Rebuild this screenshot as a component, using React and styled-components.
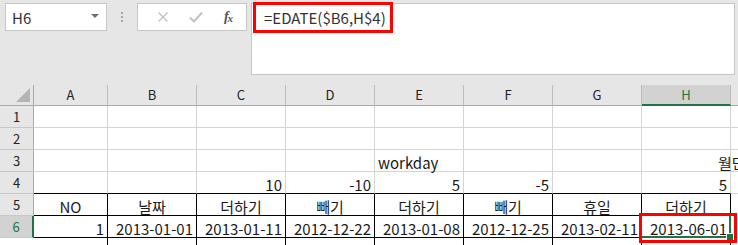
import React from 'react';
import styled, { createGlobalStyle } from 'styled-components';

const GlobalStyle = createGlobalStyle`
  html, body {
    margin: 0;
    padding: 0;
    background: #ffffff;
  }
  body {
    font-family: "Noto Sans CJK KR", "Noto Sans", sans-serif;
  }
`;

const COLS = ['A', 'B', 'C', 'D', 'E', 'F', 'G', 'H', 'I'];

// cell content per row: { col: [text, align] }
const ROWS = [
  { n: 1, cells: {} },
  { n: 2, cells: {} },
  { n: 3, cells: { E: ['workday', 'left'], H: ['월단위', 'spill'] } },
  {
    n: 4,
    cells: {
      C: ['10', 'right'],
      D: ['-10', 'right'],
      E: ['5', 'right'],
      F: ['-5', 'right'],
      H: ['5', 'right'],
    },
  },
  {
    n: 5,
    boxed: true,
    cells: {
      A: ['NO', 'center'],
      B: ['날짜', 'center'],
      C: ['더하기', 'center'],
      D: ['빼기', 'center'],
      E: ['더하기', 'center'],
      F: ['빼기', 'center'],
      G: ['휴일', 'center'],
      H: ['더하기', 'center'],
    },
  },
  {
    n: 6,
    boxed: true,
    active: true,
    cells: {
      A: ['1', 'right'],
      B: ['2013-01-01', 'right'],
      C: ['2013-01-11', 'right'],
      D: ['2012-12-22', 'right'],
      E: ['2013-01-08', 'right'],
      F: ['2012-12-25', 'right'],
      G: ['2013-02-11', 'right'],
      H: ['2013-06-01', 'right'],
    },
  },
  { n: 7, boxed: true, cells: {}, hidden: true },
];

export default function App() {
  return (
    <>
      <GlobalStyle />
      <Window>
        <Toolbar>
          <NameBox>
            <span>H6</span>
            <DropArrow />
          </NameBox>
          <Grip>
            <i />
            <i />
            <i />
          </Grip>
          <FxBox>
            <FxButton>
              <svg width="12" height="12" viewBox="0 0 12 12">
                <path d="M1.5 1.5 L10.5 10.5 M10.5 1.5 L1.5 10.5" stroke="#c2c2c2" strokeWidth="1.4" fill="none" />
              </svg>
            </FxButton>
            <FxButton>
              <svg width="14" height="12" viewBox="0 0 14 12">
                <path d="M1 6.5 L5 10.5 L13 1.5" stroke="#c2c2c2" strokeWidth="2" fill="none" />
              </svg>
            </FxButton>
            <FxButton>
              <FxLabel>
                f<sub>x</sub>
              </FxLabel>
            </FxButton>
          </FxBox>
          <FormulaBar>
            <FormulaText>=EDATE($B6,H$4)</FormulaText>
            <Highlight />
          </FormulaBar>
        </Toolbar>

        <Sheet>
          <Corner>
            <svg width="14" height="14" viewBox="0 0 14 14">
              <polygon points="14,0 14,14 0,14" fill="#b4b4b4" />
            </svg>
          </Corner>
          {COLS.map((c) => (
            <ColHead key={c} $active={c === 'H'}>
              {c}
            </ColHead>
          ))}

          {ROWS.map((row, ri) => {
            const next = ROWS[ri + 1];
            return (
              <React.Fragment key={row.n}>
                <RowHead $active={row.active} $blank={row.hidden}>
                  {row.hidden ? '' : row.n}
                </RowHead>
                {COLS.map((c) => {
                  const content = row.cells[c];
                  const inBox = c !== 'I';
                  const boxed = row.boxed && inBox;
                  const boxAbove = next && next.boxed && !row.boxed && inBox;
                  const selected = row.active && c === 'H';
                  return (
                    <Cell
                      key={c}
                      $align={content ? content[1] : 'left'}
                      $boxed={boxed}
                      $boxBottom={boxed || boxAbove}
                    >
                      {content && <CellText>{content[0]}</CellText>}
                      {selected && (
                        <Selection>
                          <FillHandle />
                        </Selection>
                      )}
                      {selected && <Highlight $cell />}
                    </Cell>
                  );
                })}
              </React.Fragment>
            );
          })}
        </Sheet>
      </Window>
    </>
  );
}

const Window = styled.div`
  width: 738px;
  height: 245px;
  overflow: hidden;
  background: #ffffff;
`;

const Toolbar = styled.div`
  box-sizing: border-box;
  height: 85px;
  padding: 3px 0 10px 5px;
  display: flex;
  align-items: flex-start;
  background: #e6e6e6;
`;

const NameBox = styled.div`
  box-sizing: border-box;
  width: 102px;
  height: 28px;
  background: #ffffff;
  border: 1px solid #c6c6c6;
  display: flex;
  align-items: center;
  justify-content: space-between;
  padding: 0 7px 0 6px;
  font-size: 15px;
  color: #333333;
`;

const DropArrow = styled.span`
  width: 0;
  height: 0;
  border-left: 4px solid transparent;
  border-right: 4px solid transparent;
  border-top: 4px solid #6f6f6f;
  margin-top: -3px;
`;

const Grip = styled.div`
  width: 30px;
  height: 28px;
  display: flex;
  flex-direction: column;
  align-items: center;
  justify-content: center;
  gap: 2px;

  i {
    display: block;
    width: 2px;
    height: 2px;
    background: #a9a9a9;
  }
`;

const FxBox = styled.div`
  box-sizing: border-box;
  width: 110px;
  height: 28px;
  background: #ffffff;
  border: 1px solid #c6c6c6;
  display: flex;
  align-items: center;
  justify-content: space-between;
  padding: 0 6px 0 13px;
`;

const FxButton = styled.div`
  width: 24px;
  display: flex;
  justify-content: center;
  align-items: center;
`;

const FxLabel = styled.span`
  font-family: "Liberation Serif", "DejaVu Serif", serif;
  font-style: italic;
  font-weight: bold;
  font-size: 14px;
  color: #555555;
  letter-spacing: -1px;

  sub {
    font-size: 11px;
    vertical-align: -1px;
  }
`;

const FormulaBar = styled.div`
  position: relative;
  box-sizing: border-box;
  flex: 1;
  height: 72px;
  margin-left: 4px;
  margin-right: 3px;
  background: #ffffff;
  border: 1px solid #c6c6c6;
  padding: 2px 0 0 12px;
`;

const FormulaText = styled.div`
  font-size: 15px;
  line-height: 24px;
  color: #333333;
`;

const Highlight = styled.div`
  position: absolute;
  box-sizing: border-box;
  border: 3px solid #ff0000;
  pointer-events: none;
  z-index: 5;
  ${(p) =>
    p.$cell
      ? `left: -3px; top: -3px; width: 98px; height: 30px;`
      : `left: 1px; top: -2px; width: 140px; height: 31px;`}
`;

const Sheet = styled.div`
  display: grid;
  width: 820px;
  grid-template-columns: 34px 74px repeat(7, 89px) 89px;
  grid-template-rows: 21px repeat(7, 22px);
`;

const Corner = styled.div`
  box-sizing: border-box;
  background: #e6e6e6;
  border-right: 1px solid #ababab;
  border-bottom: 1px solid #ababab;
  display: flex;
  align-items: flex-end;
  justify-content: flex-end;
  padding: 0 3px 3px 0;
`;

const ColHead = styled.div`
  box-sizing: border-box;
  background: ${(p) => (p.$active ? '#d2d2d2' : '#e6e6e6')};
  color: ${(p) => (p.$active ? '#217346' : '#222222')};
  border-right: 1px solid #bcbcbc;
  border-bottom: ${(p) => (p.$active ? '2px solid #217346' : '1px solid #ababab')};
  font-size: 13px;
  line-height: 20px;
  text-align: center;
`;

const RowHead = styled.div`
  box-sizing: border-box;
  background: ${(p) => (p.$blank ? '#ffffff' : p.$active ? '#d2d2d2' : '#e6e6e6')};
  color: ${(p) => (p.$active ? '#217346' : '#222222')};
  border-right: ${(p) => (p.$active ? '2px solid #217346' : p.$blank ? 'none' : '1px solid #ababab')};
  border-bottom: 1px solid ${(p) => (p.$blank ? '#ffffff' : '#c8c8c8')};
  font-size: 13px;
  line-height: 21px;
  text-align: center;
`;

const Cell = styled.div`
  position: relative;
  box-sizing: border-box;
  border-right: 1px solid ${(p) => (p.$boxed ? '#000000' : '#d4d4d4')};
  border-bottom: 1px solid ${(p) => (p.$boxBottom ? '#000000' : '#d4d4d4')};
  white-space: nowrap;
  overflow: visible;
  z-index: ${(p) => (p.$align === 'spill' ? 2 : 'auto')};
  text-align: ${(p) => (p.$align === 'spill' ? 'left' : p.$align)};
  padding: ${(p) =>
    p.$align === 'right'
      ? '0 3px 0 0'
      : p.$align === 'spill'
        ? '0 0 0 76px'
        : p.$align === 'center'
          ? '0'
          : '0 0 0 3px'};
`;

const CellText = styled.span`
  font-family: "Noto Sans CJK KR", "Noto Sans", sans-serif;
  font-size: 15px;
  line-height: 21px;
  color: #1a1a1a;
`;

const Selection = styled.div`
  position: absolute;
  left: -2px;
  top: -2px;
  right: -1px;
  bottom: -1px;
  border: 2px solid #217346;
  pointer-events: none;
  z-index: 3;
`;

const FillHandle = styled.div`
  position: absolute;
  right: -5px;
  bottom: -5px;
  width: 6px;
  height: 6px;
  background: #217346;
  border: 1px solid #ffffff;
`;
